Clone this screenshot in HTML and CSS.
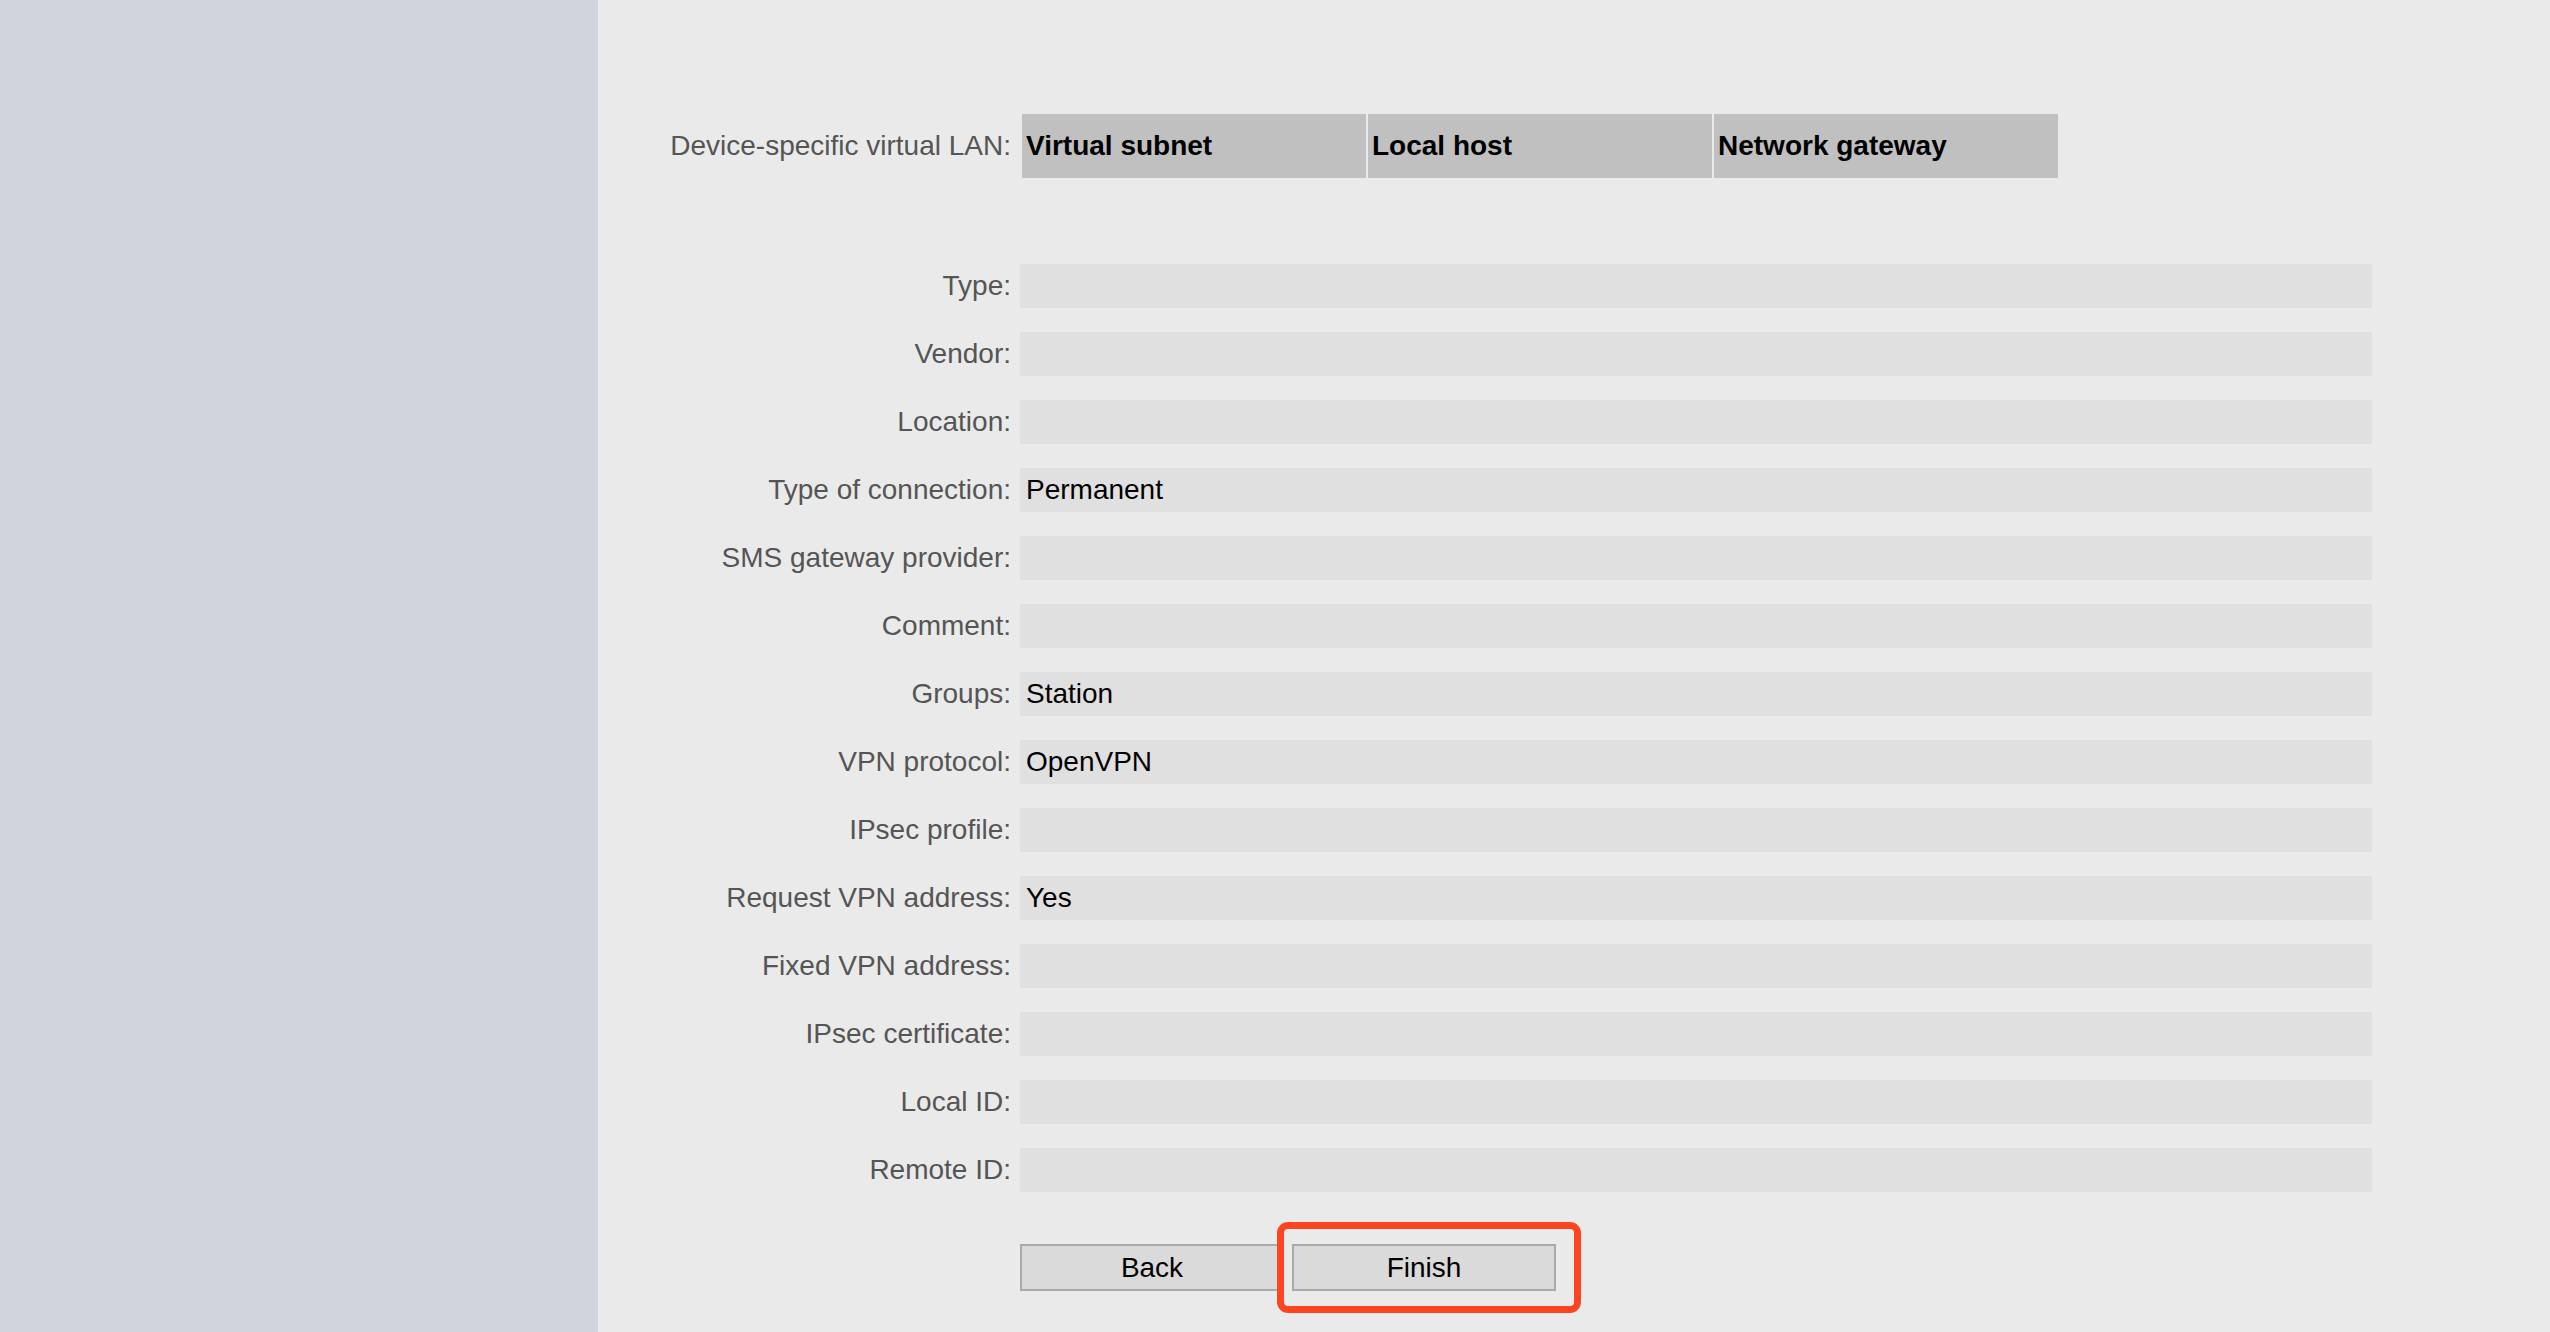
FILE: index.html
```html
<!DOCTYPE html>
<html lang="en">
<head>
    <meta charset="UTF-8">
    <title>Device wizard - Summary</title>
    <link rel="stylesheet" href="styles.css">
</head>
<body>
    <div class="page">
        <div class="sidebar"></div>

        <div class="main">
            <div class="lan-row">
                <div class="label">Device-specific virtual LAN:</div>
                <div class="lan-cells">
                    <div class="lan-cell">Virtual subnet</div>
                    <div class="lan-cell">Local host</div>
                    <div class="lan-cell">Network gateway</div>
                </div>
            </div>

            <div class="summary">
                <div class="label">Type:</div>
                <div class="value"></div>

                <div class="label">Vendor:</div>
                <div class="value"></div>

                <div class="label">Location:</div>
                <div class="value"></div>

                <div class="label">Type of connection:</div>
                <div class="value">Permanent</div>

                <div class="label">SMS gateway provider:</div>
                <div class="value"></div>

                <div class="label">Comment:</div>
                <div class="value"></div>

                <div class="label">Groups:</div>
                <div class="value">Station</div>

                <div class="label">VPN protocol:</div>
                <div class="value">OpenVPN</div>

                <div class="label">IPsec profile:</div>
                <div class="value"></div>

                <div class="label">Request VPN address:</div>
                <div class="value">Yes</div>

                <div class="label">Fixed VPN address:</div>
                <div class="value"></div>

                <div class="label">IPsec certificate:</div>
                <div class="value"></div>

                <div class="label">Local ID:</div>
                <div class="value"></div>

                <div class="label">Remote ID:</div>
                <div class="value"></div>

                <div class="actions">
                    <button type="button">Back</button>
                    <div class="finish-wrap">
                        <button type="button">Finish</button>
                        <div class="highlight"></div>
                    </div>
                </div>
            </div>
        </div>
    </div>
</body>
</html>
```

FILE: styles.css
```css
html, body {
    margin: 0;
    height: 100%;
}
body {
    font-family: "Liberation Sans", Arial, sans-serif;
    font-size: 28px;
    background-color: #eaeaea;
    overflow: hidden;
}
.page {
    display: flex;
    height: 100%;
}
.sidebar {
    width: 598px;
    flex-shrink: 0;
    background-color: #d0d4dc;
}
.main {
    flex: 1;
    padding-top: 114px;
}
.label {
    color: #555;
    text-align: right;
    white-space: nowrap;
    display: flex;
    align-items: center;
    justify-content: flex-end;
}
.lan-row {
    display: grid;
    grid-template-columns: 413px auto;
    column-gap: 9px;
    height: 64px;
}
.lan-cells {
    display: flex;
    gap: 2px;
    padding-left: 2px;
}
.lan-cell {
    width: 340px;
    padding-left: 4px;
    background-color: #c0c0c0;
    font-weight: bold;
    color: #000;
    display: flex;
    align-items: center;
}
.summary {
    display: grid;
    grid-template-columns: 413px 1352px;
    grid-auto-rows: 44px;
    column-gap: 9px;
    row-gap: 24px;
    margin-top: 86px;
}
.value {
    background-color: #e0e0e0;
    color: #000;
    padding-left: 6px;
    display: flex;
    align-items: center;
}
.actions {
    grid-column: 2;
    display: flex;
    gap: 8px;
    margin-top: 28px;
    height: 47px;
}
.actions button {
    width: 264px;
    height: 47px;
    background-color: #dadada;
    border: 2px solid #a9a9a9;
    font-family: "Liberation Sans", Arial, sans-serif;
    font-size: 28px;
    color: #000;
    padding: 0;
    cursor: pointer;
}
.finish-wrap {
    position: relative;
}
.highlight {
    position: absolute;
    top: -22px;
    bottom: -22px;
    left: -15px;
    right: -25px;
    border: 7px solid #fd4521;
    border-radius: 11px;
    pointer-events: none;
}
```
